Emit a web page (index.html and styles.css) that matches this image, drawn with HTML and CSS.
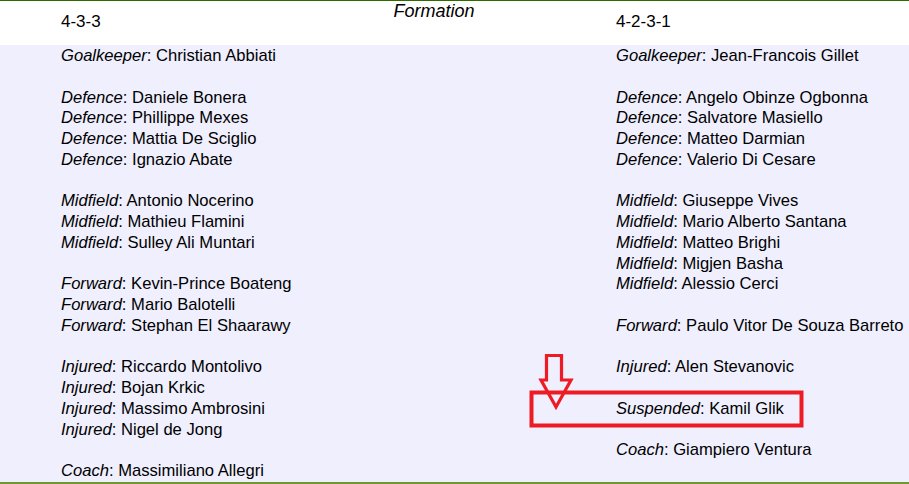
FILE: index.html
```html
<!DOCTYPE html>
<html>
<head>
<meta charset="utf-8">
<link rel="stylesheet" href="styles.css">
</head>
<body>
<div class="page">
  <div class="header">
    <div class="h-side h-left">4-3-3</div>
    <div class="h-mid">Formation</div>
    <div class="h-side h-right">4-2-3-1</div>
  </div>
  <div class="body">
    <div class="team">
      <div class="group">
        <div class="line"><i>Goalkeeper</i>: Christian Abbiati</div>
      </div>
      <div class="group">
        <div class="line"><i>Defence</i>: Daniele Bonera</div>
        <div class="line"><i>Defence</i>: Phillippe Mexes</div>
        <div class="line"><i>Defence</i>: Mattia De Sciglio</div>
        <div class="line"><i>Defence</i>: Ignazio Abate</div>
      </div>
      <div class="group">
        <div class="line"><i>Midfield</i>: Antonio Nocerino</div>
        <div class="line"><i>Midfield</i>: Mathieu Flamini</div>
        <div class="line"><i>Midfield</i>: Sulley Ali Muntari</div>
      </div>
      <div class="group">
        <div class="line"><i>Forward</i>: Kevin-Prince Boateng</div>
        <div class="line"><i>Forward</i>: Mario Balotelli</div>
        <div class="line"><i>Forward</i>: Stephan El Shaarawy</div>
      </div>
      <div class="group">
        <div class="line"><i>Injured</i>: Riccardo Montolivo</div>
        <div class="line"><i>Injured</i>: Bojan Krkic</div>
        <div class="line"><i>Injured</i>: Massimo Ambrosini</div>
        <div class="line"><i>Injured</i>: Nigel de Jong</div>
      </div>
      <div class="group">
        <div class="line"><i>Coach</i>: Massimiliano Allegri</div>
      </div>
    </div>
    <div class="team">
      <div class="group">
        <div class="line"><i>Goalkeeper</i>: Jean-Francois Gillet</div>
      </div>
      <div class="group">
        <div class="line"><i>Defence</i>: Angelo Obinze Ogbonna</div>
        <div class="line"><i>Defence</i>: Salvatore Masiello</div>
        <div class="line"><i>Defence</i>: Matteo Darmian</div>
        <div class="line"><i>Defence</i>: Valerio Di Cesare</div>
      </div>
      <div class="group">
        <div class="line"><i>Midfield</i>: Giuseppe Vives</div>
        <div class="line"><i>Midfield</i>: Mario Alberto Santana</div>
        <div class="line"><i>Midfield</i>: Matteo Brighi</div>
        <div class="line"><i>Midfield</i>: Migjen Basha</div>
        <div class="line"><i>Midfield</i>: Alessio Cerci</div>
      </div>
      <div class="group">
        <div class="line"><i>Forward</i>: Paulo Vitor De Souza Barreto</div>
      </div>
      <div class="group">
        <div class="line"><i>Injured</i>: Alen Stevanovic</div>
      </div>
      <div class="group">
        <div class="line"><i>Suspended</i>: Kamil Glik</div>
      </div>
      <div class="group">
        <div class="line"><i>Coach</i>: Giampiero Ventura</div>
      </div>
    </div>
  </div>
  <svg class="mark" width="909" height="484" viewBox="0 0 909 484">
    <rect x="531.5" y="392.5" width="270" height="33" fill="none" stroke="#ed1c24" stroke-width="4"/>
    <polygon points="546.5,355.5 561.5,355.5 561.5,380 571,380 556,407 541,380 546.5,380" fill="none" stroke="#ed1c24" stroke-width="3.2" stroke-linejoin="miter"/>
  </svg>
</div>
</body>
</html>
```
FILE: styles.css
```css
html, body {
  margin: 0;
  padding: 0;
  background: #ffffff;
}
.page {
  position: relative;
  width: 909px;
  height: 484px;
  overflow: hidden;
  font-family: "Liberation Sans", Arial, sans-serif;
  font-size: 16.6px;
  color: #000;
}
.header {
  display: grid;
  grid-template-columns: 308px 252px 1fr;
  height: 44px;
  border-top: 1px solid #2f6a00;
  background: #fff;
}
.h-side {
  padding-top: 11px;
  font-size: 17px;
  line-height: normal;
}
.h-left {
  padding-left: 61px;
}
.h-right {
  padding-left: 56px;
}
.h-mid {
  text-align: center;
  font-style: italic;
  font-size: 18px;
  line-height: normal;
  padding-top: 0;
}
.body {
  display: grid;
  grid-template-columns: 555px 1fr;
  background: #efeffe;
  height: 439px;
  box-sizing: border-box;
  padding-top: 1px;
  border-bottom: 2px solid #6b9a2e;
}
.team {
  padding-left: 61px;
  white-space: nowrap;
}
.group {
  margin-bottom: 20.75px;
}
.line {
  line-height: 20.75px;
  height: 20.75px;
}
.mark {
  position: absolute;
  left: 0;
  top: 0;
  pointer-events: none;
}
```
